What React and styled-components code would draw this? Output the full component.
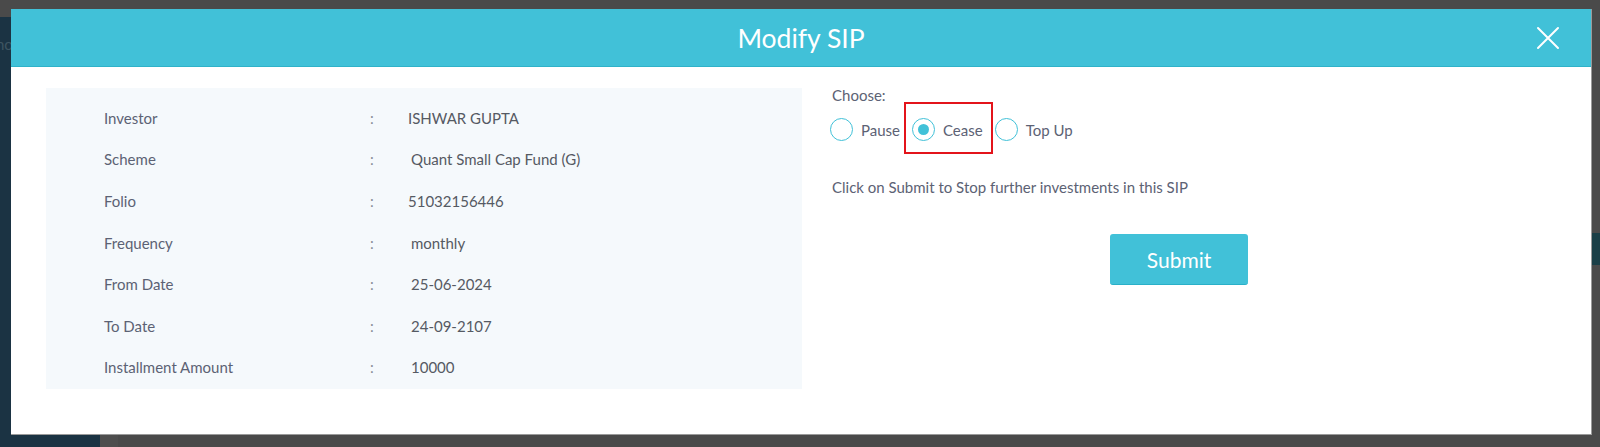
import React, { useState } from "react";
import styled, { createGlobalStyle } from "styled-components";

const GlobalStyle = createGlobalStyle`
  html, body {
    margin: 0;
    padding: 0;
    width: 1600px;
    height: 447px;
    overflow: hidden;
    font-family: Lato, "Open Sans", sans-serif;
  }
`;

const details = [
  { label: "Investor", value: "ISHWAR GUPTA" },
  { label: "Scheme", value: " Quant Small Cap Fund (G)", indent: true },
  { label: "Folio", value: "51032156446" },
  { label: "Frequency", value: " monthly", indent: true },
  { label: "From Date", value: " 25-06-2024", indent: true },
  { label: "To Date", value: " 24-09-2107", indent: true },
  { label: "Installment Amount", value: " 10000", indent: true },
];

const options = ["Pause", "Cease", "Top Up"];

export default function App() {
  const [choice, setChoice] = useState("Cease");

  return (
    <>
      <GlobalStyle />
      <Page>
        <TopBar />
        <Body>
          <Sidebar>
            <Ghost>no</Ghost>
          </Sidebar>
          <Gutter />
          <Main>
            <SideTab />
          </Main>
        </Body>

        <Modal>
          <Header>
            <Title>Modify SIP</Title>
            <Close aria-label="close">
              <svg width="24" height="24" viewBox="0 0 24 24">
                <path
                  d="M2 2 L22 22 M22 2 L2 22"
                  stroke="#fff"
                  strokeWidth="2"
                  strokeLinecap="round"
                />
              </svg>
            </Close>
          </Header>

          <Content>
            <DetailsPanel>
              {details.map((d) => (
                <DetailRow key={d.label}>
                  <Label>{d.label}</Label>
                  <Colon>:</Colon>
                  <Value $indent={d.indent}>{d.value.trim()}</Value>
                </DetailRow>
              ))}
            </DetailsPanel>

            <ActionColumn>
              <Choose>Choose:</Choose>
              <RadioGroup>
                {options.map((o) => (
                  <Option
                    key={o}
                    $highlight={o === "Cease"}
                    onClick={() => setChoice(o)}
                  >
                    <Circle $checked={choice === o} />
                    <OptionText>{o}</OptionText>
                  </Option>
                ))}
              </RadioGroup>
              <Hint>Click on Submit to Stop further investments in this SIP</Hint>
              <ButtonRow>
                <SubmitButton>Submit</SubmitButton>
              </ButtonRow>
            </ActionColumn>
          </Content>
        </Modal>
      </Page>
    </>
  );
}

const Page = styled.div`
  position: relative;
  width: 1600px;
  height: 447px;
  display: flex;
  flex-direction: column;
  background-color: #4a4a4a;
`;

const TopBar = styled.div`
  height: 17px;
  background-color: #4a4a4a;
`;

const Body = styled.div`
  flex: 1;
  display: flex;
`;

const Sidebar = styled.div`
  width: 100px;
  background-color: #1b3343;
  padding-top: 18px;
  overflow: hidden;
`;

const Ghost = styled.span`
  display: block;
  font-size: 15px;
  color: #3e5561;
  margin-left: -4px;
`;

const Gutter = styled.div`
  width: 18px;
  background-color: #4e4e4e;
`;

const Main = styled.div`
  flex: 1;
  display: flex;
  justify-content: flex-end;
  align-items: flex-start;
  padding-top: 216px;
`;

const SideTab = styled.div`
  width: 10px;
  height: 32px;
  background-color: #1a3f47;
`;

const Modal = styled.div`
  position: absolute;
  left: 11px;
  top: 9px;
  width: 1581px;
  height: 426px;
  background-color: #fff;
  border-right: 1px solid #9a9a9a;
  border-bottom: 1px solid #9a9a9a;
  box-sizing: border-box;
  display: flex;
  flex-direction: column;
`;

const Header = styled.div`
  position: relative;
  height: 58px;
  background-color: #41c1d8;
  border-bottom: 1px solid #2fb2c9;
  box-sizing: border-box;
  display: flex;
  align-items: center;
  justify-content: center;
`;

const Title = styled.h2`
  margin: 0;
  font-size: 26.5px;
  font-weight: 400;
  color: #fff;
`;

const Close = styled.button`
  position: absolute;
  right: 31px;
  top: 17px;
  width: 24px;
  height: 24px;
  padding: 0;
  border: none;
  background: none;
  cursor: pointer;
`;

const Content = styled.div`
  display: flex;
  align-items: flex-start;
  padding: 21px 35px 0 35px;
`;

const DetailsPanel = styled.div`
  width: 756px;
  height: 301px;
  box-sizing: border-box;
  padding: 9px 0 0 58px;
  background-color: #f5f9fc;
  display: flex;
  flex-direction: column;
`;

const DetailRow = styled.div`
  flex: 0 0 41.6px;
  display: grid;
  grid-template-columns: 266px 38px 1fr;
  align-items: center;
  font-size: 15px;
`;

const Label = styled.span`
  color: #5c6274;
`;

const Colon = styled.span`
  color: #8a8f99;
`;

const Value = styled.span`
  color: #555a63;
  padding-left: ${(p) => (p.$indent ? "3px" : "0")};
`;

const ActionColumn = styled.div`
  width: 694px;
  margin-left: 30px;
  display: flex;
  flex-direction: column;
`;

const Choose = styled.div`
  font-size: 15px;
  color: #5c6274;
  margin-top: -2px;
`;

const RadioGroup = styled.div`
  display: flex;
  align-items: center;
  gap: 4px;
  margin-top: 14px;
  margin-left: -2px;
`;

const Option = styled.label`
  position: relative;
  display: inline-flex;
  align-items: center;
  gap: 8px;
  padding: 0 ${(p) => (p.$highlight ? "8px" : "0")};
  cursor: pointer;

  &::after {
    content: "";
    display: ${(p) => (p.$highlight ? "block" : "none")};
    position: absolute;
    left: 0;
    right: -2px;
    top: -16px;
    bottom: -13px;
    border: 2px solid #e3141b;
  }
`;

const Circle = styled.span`
  width: 23px;
  height: 23px;
  border-radius: 50%;
  border: 1.5px solid #41c1d8;
  box-sizing: border-box;
  background-color: #fff;
  display: inline-flex;
  align-items: center;
  justify-content: center;

  &::before {
    content: "";
    width: 11px;
    height: 11px;
    border-radius: 50%;
    background-color: #41c1d8;
    display: ${(p) => (p.$checked ? "block" : "none")};
  }
`;

const OptionText = styled.span`
  font-size: 15px;
  color: #5c6274;
`;

const Hint = styled.div`
  margin-top: 37px;
  font-size: 15px;
  color: #5c6274;
`;

const ButtonRow = styled.div`
  display: flex;
  justify-content: center;
  margin-top: 38px;
`;

const SubmitButton = styled.button`
  width: 138px;
  height: 51px;
  border: none;
  border-bottom: 1px solid #2ab0c8;
  border-radius: 3px;
  background-color: #41c1d8;
  color: #fff;
  font-family: Lato, "Open Sans", sans-serif;
  font-size: 21px;
  cursor: pointer;
`;
